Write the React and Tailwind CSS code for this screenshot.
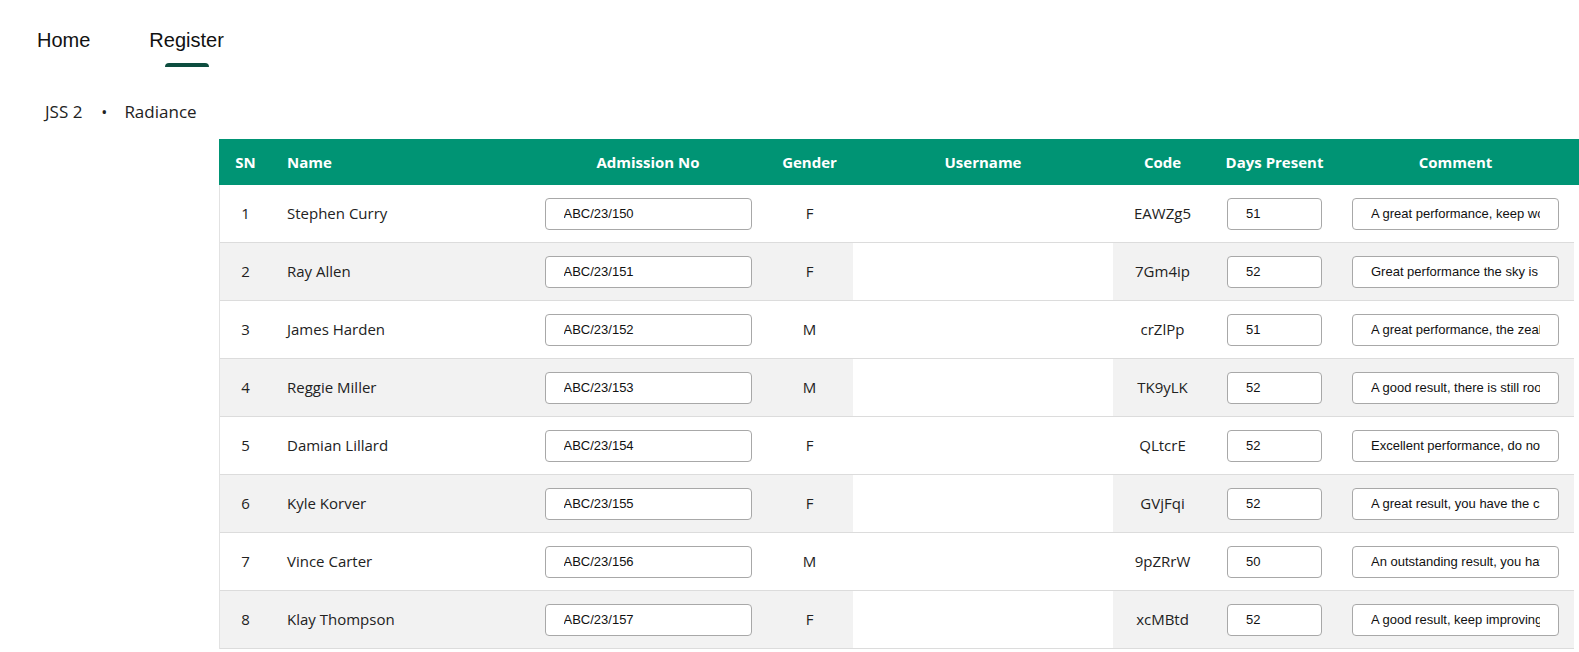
import React from 'react';

const students = [
  { sn: 1, name: 'Stephen Curry', adm: 'ABC/23/150', gender: 'F', code: 'EAWZg5', days: '51', comment: 'A great performance, keep working hard' },
  { sn: 2, name: 'Ray Allen', adm: 'ABC/23/151', gender: 'F', code: '7Gm4ip', days: '52', comment: 'Great performance the sky is your limit' },
  { sn: 3, name: 'James Harden', adm: 'ABC/23/152', gender: 'M', code: 'crZlPp', days: '51', comment: 'A great performance, the zeal is commendable' },
  { sn: 4, name: 'Reggie Miller', adm: 'ABC/23/153', gender: 'M', code: 'TK9yLK', days: '52', comment: 'A good result, there is still room for improvement' },
  { sn: 5, name: 'Damian Lillard', adm: 'ABC/23/154', gender: 'F', code: 'QLtcrE', days: '52', comment: 'Excellent performance, do not relent' },
  { sn: 6, name: 'Kyle Korver', adm: 'ABC/23/155', gender: 'F', code: 'GVjFqi', days: '52', comment: 'A great result, you have the capacity to do more' },
  { sn: 7, name: 'Vince Carter', adm: 'ABC/23/156', gender: 'M', code: '9pZRrW', days: '50', comment: 'An outstanding result, you have done well' },
  { sn: 8, name: 'Klay Thompson', adm: 'ABC/23/157', gender: 'F', code: 'xcMBtd', days: '52', comment: 'A good result, keep improving' },
];

const cols = 'grid grid-cols-[51px_259px_236px_87px_260px_99px_125px_237px]';

// Read-only text box used in the register cells
const Field = ({ value, width }) => (
  <input
    readOnly
    value={value}
    className={`${width} h-[32px] rounded-[4px] border border-[#a8a8a8] bg-white px-[18px] text-[13px] text-[#111] outline-none font-['Liberation_Sans',Arial,sans-serif]`}
  />
);

export default function App() {
  return (
    <div className="min-h-screen bg-white text-[#222] font-['Open_Sans','Noto_Sans',sans-serif]">
      {/* Top navigation */}
      <nav className="flex pl-[37px] pt-[26px] font-['Liberation_Sans',Arial,sans-serif] text-[20px] text-[#111]">
        <a className="leading-[28px]">Home</a>
        <div className="ml-[59px] flex flex-col items-center">
          <a className="leading-[28px]">Register</a>
          <span className="mt-[9px] block h-[4px] w-[44px] rounded-t-[4px] bg-[#0d4d3f]" />
        </div>
      </nav>

      {/* Breadcrumb */}
      <div className="flex items-center pl-[45px] pt-[33px] text-[17px] leading-[24px] text-[#222]">
        <span>JSS 2</span>
        <span className="ml-[19px] mr-[17px] text-[16px]">•</span>
        <span>Radiance</span>
      </div>

      {/* Register table */}
      <div className="ml-[219px] mt-[15px]">
        <div className="bg-[#009474] pl-[1px] text-white text-[15px] font-bold">
          <div className={`${cols} h-[46px] items-center`}>
            <div className="text-center">SN</div>
            <div className="pl-[16px]">Name</div>
            <div className="text-center">Admission No</div>
            <div className="text-center">Gender</div>
            <div className="text-center">Username</div>
            <div className="text-center">Code</div>
            <div className="text-center">Days Present</div>
            <div className="text-center">Comment</div>
          </div>
        </div>
        <div className="w-[1355px] border-l border-[#e2e2e2] text-[15px]">
          {students.map((s, i) => (
            <div
              key={s.sn}
              className={`${cols} h-[58px] border-b border-[#dcdcdc] ${i % 2 === 1 ? 'bg-[#f2f2f2]' : 'bg-white'}`}
            >
              <div className="flex items-center justify-center">{s.sn}</div>
              <div className="flex items-center pl-[16px]">{s.name}</div>
              <div className="flex items-center justify-center">
                <Field value={s.adm} width="w-[207px]" />
              </div>
              <div className="flex items-center justify-center">{s.gender}</div>
              <div className="bg-white" />
              <div className="flex items-center justify-center">{s.code}</div>
              <div className="flex items-center justify-center">
                <Field value={s.days} width="w-[95px]" />
              </div>
              <div className="flex items-center justify-center">
                <Field value={s.comment} width="w-[207px]" />
              </div>
            </div>
          ))}
        </div>
      </div>
    </div>
  );
}
